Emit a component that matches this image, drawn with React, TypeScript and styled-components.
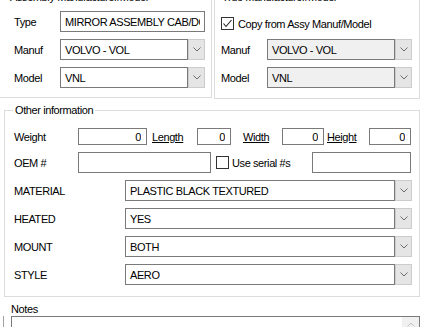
import React from "react";
import styled, { createGlobalStyle } from "styled-components";

const Global = createGlobalStyle`
  html, body { margin: 0; padding: 0; background: #ffffff; }
  body {
    font-family: "Liberation Sans", Arial, sans-serif;
    font-size: 11px;
    letter-spacing: -0.4px;
    color: #000;
  }
  #root { width: 430px; height: 327px; overflow: hidden; }
`;

const Page = styled.div`
  width: 430px;
  height: 327px;
  overflow: hidden;
  display: flex;
  flex-direction: column;
`;

const TopRow = styled.div`
  display: flex;
  align-items: flex-start;
  gap: 2px;
  margin: -3px 0 0 -2px;
`;

const Group = styled.div<{ $w: number }>`
  box-sizing: border-box;
  width: ${(p) => p.$w}px;
  border: 1px solid #dcdcdc;
  display: flex;
  flex-direction: column;
`;

const Legend = styled.div<{ $ml: number }>`
  align-self: flex-start;
  margin: -7px 0 0 ${(p) => p.$ml}px;
  padding: 0 2px;
  line-height: 13px;
  height: 13px;
  background: #ffffff;
  white-space: nowrap;
`;

const Body = styled.div<{ $pt: number; $pl: number; $pb: number }>`
  display: flex;
  flex-direction: column;
  gap: 7px;
  padding: ${(p) => p.$pt}px 0 ${(p) => p.$pb}px ${(p) => p.$pl}px;
`;

const Row = styled.div<{ $h?: number; $mb?: number }>`
  display: flex;
  align-items: center;
  height: ${(p) => p.$h ?? 21}px;
  margin-bottom: ${(p) => p.$mb ?? 0}px;
`;

const Label = styled.span<{ $w: number }>`
  width: ${(p) => p.$w}px;
  flex: none;
  white-space: nowrap;
`;

const LinkLabel = styled.span<{ $w: number; $ml: number }>`
  width: ${(p) => p.$w}px;
  margin-left: ${(p) => p.$ml}px;
  flex: none;
  text-decoration: underline;
  white-space: nowrap;
`;

const TextBox = styled.input<{ $w: number; $h?: number; $right?: boolean; $ml?: number }>`
  box-sizing: border-box;
  width: ${(p) => p.$w}px;
  height: ${(p) => p.$h ?? 21}px;
  flex: none;
  margin: 0 0 0 ${(p) => p.$ml ?? 0}px;
  border: 1px solid #7a7a7a;
  border-radius: 0;
  background: #ffffff;
  padding: 0 ${(p) => (p.$right ? 5 : 4)}px 0 4px;
  font: inherit;
  letter-spacing: inherit;
  color: #000;
  text-align: ${(p) => (p.$right ? "right" : "left")};
  outline: none;
`;

const Combo = styled.div<{ $w: number }>`
  box-sizing: border-box;
  width: ${(p) => p.$w}px;
  height: 21px;
  flex: none;
  display: flex;
`;

const ComboField = styled.div<{ $disabled?: boolean }>`
  flex: 1;
  box-sizing: border-box;
  border: 1px solid #7a7a7a;
  background: ${(p) => (p.$disabled ? "#f0f0f0" : "#ffffff")};
  padding-left: 4px;
  display: flex;
  align-items: center;
  white-space: nowrap;
  overflow: hidden;
`;

const ComboButton = styled.div`
  width: 17px;
  flex: none;
  box-sizing: border-box;
  border: 1px solid #cccccc;
  background: #e5e5e5;
  display: flex;
  align-items: center;
  justify-content: center;
`;

const CheckBox = styled.span<{ $ml?: number }>`
  box-sizing: border-box;
  width: 13px;
  height: 13px;
  flex: none;
  margin-left: ${(p) => p.$ml ?? 0}px;
  border: 1px solid #333333;
  background: #ffffff;
  display: flex;
  align-items: center;
  justify-content: center;
`;

const CheckText = styled.span<{ $ml: number; $w?: number }>`
  margin-left: ${(p) => p.$ml}px;
  ${(p) => (p.$w ? `width: ${p.$w}px; flex: none;` : "")}
  white-space: nowrap;
`;

const OtherGroup = styled(Group)`
  margin: 11px 0 0 4px;
`;

const NotesLabel = styled.div`
  margin: 6px 0 0 11px;
  line-height: 13px;
  height: 13px;
`;

const NotesRow = styled.div`
  display: flex;
  flex: 1;
`;

const Stub = styled.div`
  width: 4px;
  box-sizing: border-box;
  border-right: 1px solid #a0a0a0;
  flex: none;
`;

const NotesBox = styled.div`
  margin-left: 7px;
  width: 409px;
  box-sizing: border-box;
  border: 1px solid #7a7a7a;
  border-bottom: none;
  display: flex;
  justify-content: flex-end;
`;

const ScrollUp = styled.div`
  width: 17px;
  height: 14px;
  background: #f0f0f0;
  display: flex;
  align-items: center;
  justify-content: center;
`;

const Chevron = () => (
  <svg width="8" height="5" viewBox="0 0 8 5">
    <polyline points="0.5,0.5 4,4 7.5,0.5" fill="none" stroke="#6d6d6d" strokeWidth="1" />
  </svg>
);

const ChevronUp = () => (
  <svg width="8" height="5" viewBox="0 0 8 5">
    <polyline points="0.5,4.5 4,1 7.5,4.5" fill="none" stroke="#c2c2c2" strokeWidth="1" />
  </svg>
);

const Check = () => (
  <svg width="11" height="11" viewBox="0 0 11 11">
    <polyline points="1.5,5.5 4,8.5 9.5,2" fill="none" stroke="#222" strokeWidth="1.1" />
  </svg>
);

const ComboBox = ({ w, value, disabled }: { w: number; value: string; disabled?: boolean }) => (
  <Combo $w={w}>
    <ComboField $disabled={disabled}>{value}</ComboField>
    <ComboButton>
      <Chevron />
    </ComboButton>
  </Combo>
);

const attrs = [
  ["MATERIAL", "PLASTIC BLACK TEXTURED"],
  ["HEATED", "YES"],
  ["MOUNT", "BOTH"],
  ["STYLE", "AERO"],
];

export default function App() {
  return (
    <>
      <Global />
      <Page>
        <TopRow>
          <Group $w={214}>
            <Legend $ml={9}>Assembly Manufacturer/Model</Legend>
            <Body $pt={7} $pl={15} $pb={9}>
              <Row>
                <Label $w={46}>Type</Label>
                <TextBox $w={145} readOnly value="MIRROR ASSEMBLY CAB/DOOR" />
              </Row>
              <Row>
                <Label $w={46}>Manuf</Label>
                <ComboBox w={145} value="VOLVO - VOL" />
              </Row>
              <Row>
                <Label $w={46}>Model</Label>
                <ComboBox w={145} value="VNL" />
              </Row>
            </Body>
          </Group>
          <Group $w={206}>
            <Legend $ml={5}>True Manufacturer/Model</Legend>
            <Body $pt={12} $pl={6} $pb={10}>
              <Row $h={15} $mb={1}>
                <CheckBox>
                  <Check />
                </CheckBox>
                <CheckText $ml={4}>Copy from Assy Manuf/Model</CheckText>
              </Row>
              <Row>
                <Label $w={46}>Manuf</Label>
                <ComboBox w={145} value="VOLVO - VOL" disabled />
              </Row>
              <Row>
                <Label $w={46}>Model</Label>
                <ComboBox w={145} value="VNL" disabled />
              </Row>
            </Body>
          </Group>
        </TopRow>

        <OtherGroup $w={416}>
          <Legend $ml={8}>Other information</Legend>
          <Body $pt={11} $pl={9} $pb={11}>
            <Row $h={17}>
              <Label $w={64}>Weight</Label>
              <TextBox $w={69} $h={17} $right readOnly value="0" />
              <LinkLabel $w={45} $ml={5}>Length</LinkLabel>
              <TextBox $w={34} $h={17} $right readOnly value="0" />
              <LinkLabel $w={39} $ml={12}>Width</LinkLabel>
              <TextBox $w={42} $h={17} $right readOnly value="0" />
              <LinkLabel $w={42} $ml={3}>Height</LinkLabel>
              <TextBox $w={42} $h={17} $right readOnly value="0" />
            </Row>
            <Row>
              <Label $w={64}>OEM #</Label>
              <TextBox $w={133} readOnly value="" />
              <CheckBox $ml={5} />
              <CheckText $ml={3} $w={80}>Use serial #s</CheckText>
              <TextBox $w={99} readOnly value="" />
            </Row>
            {attrs.map(([k, v]) => (
              <Row key={k}>
                <Label $w={111}>{k}</Label>
                <ComboBox w={287} value={v} />
              </Row>
            ))}
          </Body>
        </OtherGroup>

        <NotesLabel>Notes</NotesLabel>
        <NotesRow>
          <Stub />
          <NotesBox>
            <ScrollUp>
              <ChevronUp />
            </ScrollUp>
          </NotesBox>
        </NotesRow>
      </Page>
    </>
  );
}
